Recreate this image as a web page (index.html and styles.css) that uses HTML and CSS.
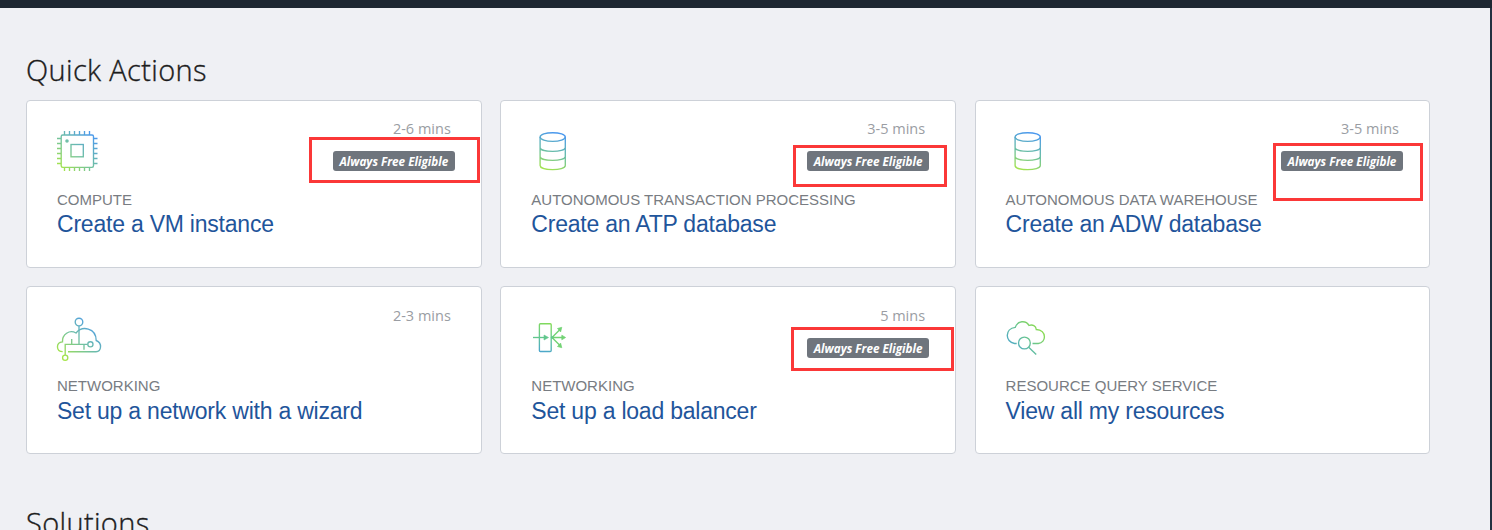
FILE: index.html
```html
<!DOCTYPE html>
<html lang="en">
<head>
<meta charset="utf-8">
<title>Quick Actions</title>
<link rel="stylesheet" href="styles.css">
</head>
<body>
<svg class="defs" width="0" height="0" aria-hidden="true">
  <defs>
    <linearGradient id="diag" gradientUnits="userSpaceOnUse" x1="5" y1="40" x2="37" y2="5">
      <stop offset="0" stop-color="#a6e54a"/><stop offset=".5" stop-color="#6fbfa5"/><stop offset="1" stop-color="#4a98ee"/>
    </linearGradient>
    <linearGradient id="rise" gradientUnits="userSpaceOnUse" x1="14" y1="41" x2="26" y2="4">
      <stop offset="0" stop-color="#a6e54a"/><stop offset=".5" stop-color="#68bda6"/><stop offset="1" stop-color="#4a98ee"/>
    </linearGradient>
    <linearGradient id="fall" gradientUnits="userSpaceOnUse" x1="12" y1="37" x2="20" y2="8">
      <stop offset="0" stop-color="#4aa5cc"/><stop offset=".5" stop-color="#65c894"/><stop offset="1" stop-color="#84dc55"/>
    </linearGradient>
    <linearGradient id="across" gradientUnits="userSpaceOnUse" x1="8" y1="34" x2="34" y2="10">
      <stop offset="0" stop-color="#4fa9c9"/><stop offset=".5" stop-color="#68c492"/><stop offset="1" stop-color="#8fde4c"/>
    </linearGradient>
    <g id="database">
      <ellipse cx="22.7" cy="8" rx="12.6" ry="4.3"/>
      <path d="M10.1 8V36.5C10.1 42 35.3 42 35.3 36.5V8M10.1 18.5C10.1 23.7 35.3 23.7 35.3 18.5M10.1 27.5C10.1 32.7 35.3 32.7 35.3 27.5"/>
    </g>
  </defs>
</svg>
<header class="topbar"></header>
<main class="page">
  <h1 class="heading quick">Quick Actions</h1>
  <section class="grid">
    <article class="card">
      <div class="card-top">
        <svg class="icon" viewBox="0 0 48 48" stroke="url(#diag)">
          <rect x="5.2" y="6" width="32.3" height="32.3" rx="1.5"/>
          <rect x="15" y="15.5" width="12.3" height="12.3"/>
          <circle cx="11" cy="12" r="1.1" fill="#6fbfa5"/>
          <path d="M8.5 2v4M13.5 2v4M18.5 2v4M23.5 2v4M28.5 2v4M33.5 2v4M8.5 38v4M13.5 38v4M18.5 38v4M23.5 38v4M28.5 38v4M33.5 38v4M1 9.5h4M1 14.5h4M1 19.5h4M1 24.5h4M1 29.5h4M1 34.5h4M37.5 9.5h4M37.5 14.5h4M37.5 19.5h4M37.5 24.5h4M37.5 29.5h4M37.5 34.5h4"/>
        </svg>
        <div class="meta"><span class="time">2-6 mins</span><span class="badge">Always Free Eligible</span></div>
      </div>
      <div class="label">COMPUTE</div>
      <a class="title">Create a VM instance</a>
    </article>
    <article class="card">
      <div class="card-top">
        <svg class="icon" viewBox="0 0 48 48" stroke="url(#rise)"><use href="#database"/></svg>
        <div class="meta"><span class="time">3-5 mins</span><span class="badge">Always Free Eligible</span></div>
      </div>
      <div class="label">AUTONOMOUS TRANSACTION PROCESSING</div>
      <a class="title">Create an ATP database</a>
    </article>
    <article class="card">
      <div class="card-top">
        <svg class="icon" viewBox="0 0 48 48" stroke="url(#rise)"><use href="#database"/></svg>
        <div class="meta"><span class="time">3-5 mins</span><span class="badge">Always Free Eligible</span></div>
      </div>
      <div class="label">AUTONOMOUS DATA WAREHOUSE</div>
      <a class="title">Create an ADW database</a>
    </article>
    <article class="card lower">
      <div class="card-top">
        <svg class="icon" viewBox="0 0 48 48" stroke="url(#diag)">
          <circle cx="23" cy="7" r="3.8"/>
          <circle cx="9.2" cy="42.7" r="2.6"/>
          <circle cx="34.4" cy="29.3" r="2.6"/>
          <path d="M23 11V29.3M9.2 40V29.3H31.7M15.7 24V29.3M28 29.3V34.7"/>
          <path d="M6.7 36.7C0 36.5-.5 27.5 6.5 26.8C6 19.5 13.5 14.2 20 18C26 10.5 40 12.5 40.2 25.5C46.5 28 45.5 36.7 40 36.7H12"/>
        </svg>
        <div class="meta"><span class="time">2-3 mins</span></div>
      </div>
      <div class="label">NETWORKING</div>
      <a class="title">Set up a network with a wizard</a>
    </article>
    <article class="card lower">
      <div class="card-top">
        <svg class="icon" viewBox="0 0 48 48" stroke="url(#fall)">
          <rect x="9.4" y="8.7" width="11.8" height="27.8" rx="1"/>
          <g stroke="#62c78d"><path d="M3 22.5H15"/><path d="M14 20l4.500 2.500-4.500 2.500z" fill="#62c78d" stroke-width=".6"/></g>
          <g stroke="#72d374"><path d="M22 22.500L30 14.500M22 22.500H33M22 22.500L30 30.500"/><path d="M27.500 13.500l4.300-1.200-1.200 4.600zM31.800 20.200l3.800 2.300-3.800 2.300zM27.500 31.500l4.300 1.200-1.200-4.600z" fill="#72d374" stroke-width=".7"/><circle cx="22" cy="22.500" r="1.200" fill="#62c78d" stroke="none"/></g>
        </svg>
        <div class="meta"><span class="time">5 mins</span><span class="badge">Always Free Eligible</span></div>
      </div>
      <div class="label">NETWORKING</div>
      <a class="title">Set up a load balancer</a>
    </article>
    <article class="card lower">
      <div class="card-top">
        <svg class="icon" viewBox="0 0 48 48" stroke="url(#across)">
          <path d="M11.7 28.500H9.500C0 27-.5 13.500 10.300 12.300C12.500 5.500 21 5 24 10.500C27.500 9 31 11 31.300 14.500C42 15 41.500 28 33.300 28.500H27.500"/>
          <circle cx="19.4" cy="28" r="5.9"/>
          <path d="M23.7 32.200L31.200 39.500"/>
        </svg>
      </div>
      <div class="label">RESOURCE QUERY SERVICE</div>
      <a class="title">View all my resources</a>
    </article>
  </section>
  <h1 class="heading solutions">Solutions</h1>
</main>
<div class="mark mark-vm"></div>
<div class="mark mark-atp"></div>
<div class="mark mark-adw"></div>
<div class="mark mark-lb"></div>
</body>
</html>
```
FILE: styles.css
```css
* { box-sizing: border-box; }
html { height: 100%; overflow: hidden; }
body {
  margin: 0;
  height: 530px;
  overflow: hidden;
  position: relative;
  background: #eff0f4;
  font-family: "Liberation Sans", Arial, sans-serif;
}
.defs { position: absolute; }
.topbar { height: 8px; background: #1e2732; }
.page {
  height: 522px;
  padding: 41px 60px 0 26px;
  border-right: 2px solid #243040;
  overflow: hidden;
}
.heading {
  margin: 0;
  font: 300 29px/42px "Open Sans", "Noto Sans", sans-serif;
  letter-spacing: .35px;
  -webkit-text-stroke: .35px #1c1c1c;
  color: #1c1c1c;
}
.quick { height: 51px; }
.solutions { padding-top: 48px; }
.grid {
  display: grid;
  grid-template-columns: 455.8px 455.8px 455.4px;
  grid-auto-rows: 168px;
  gap: 18px 18.5px;
}
.card {
  background: #fff;
  border: 1px solid #cdd1d8;
  border-radius: 4px;
  padding: 28px 26px 0 30px;
}
.card-top {
  display: flex;
  justify-content: space-between;
  height: 62px;
}
.icon {
  width: 48px;
  height: 48px;
  margin-left: -1px;
  fill: none;
  stroke-width: 1.35;
}
.meta {
  display: flex;
  flex-direction: column;
  align-items: flex-end;
  margin-top: -10px;
}
.time {
  font: 400 14.5px/20px "Open Sans", sans-serif;
  color: #9a9da3;
  margin-right: 4px;
}
.badge {
  margin-top: 12px;
  width: 122px;
  height: 20px;
  border-radius: 3px;
  background: #6f757d;
  color: #fff;
  text-align: center;
  white-space: nowrap;
  font: italic 700 11.7px/21px "Open Sans", sans-serif;
}
.label {
  font-size: 15px;
  line-height: 18px;
  color: #787c82;
  white-space: nowrap;
}
.title {
  display: block;
  font-size: 23px;
  letter-spacing: -.22px;
  line-height: 30px;
  color: #1f559b;
  white-space: nowrap;
}
.lower .meta { margin-top: -9px; }
.lower .title { line-height: 32px; }
.mark { position: absolute; border: 3px solid #fb3838; }
.mark-vm { left: 309px; top: 137px; width: 171px; height: 46px; }
.mark-atp { left: 793px; top: 145px; width: 154px; height: 42px; }
.mark-adw { left: 1273px; top: 143px; width: 150px; height: 58px; }
.mark-lb { left: 791px; top: 327px; width: 163px; height: 44px; }
```
